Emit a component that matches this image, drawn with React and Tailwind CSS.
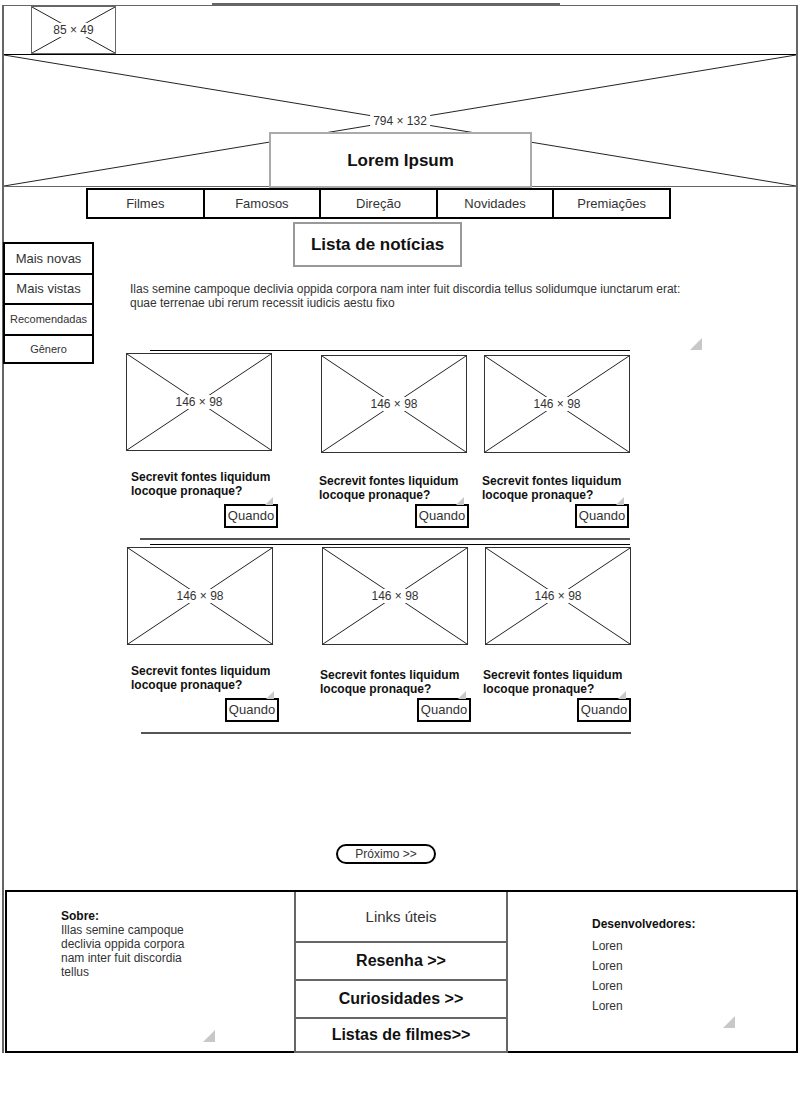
import React from "react"

function Placeholder({ label, className }) {
  return (
    <div className={`relative bg-white ${className}`}>
      <svg className="absolute inset-0 h-full w-full" viewBox="0 0 100 100" preserveAspectRatio="none">
        <line x1="0" y1="0" x2="100" y2="100" stroke="#222" strokeWidth="1" vectorEffect="non-scaling-stroke" />
        <line x1="0" y1="100" x2="100" y2="0" stroke="#222" strokeWidth="1" vectorEffect="non-scaling-stroke" />
      </svg>
      <span className="absolute left-1/2 top-1/2 -translate-x-1/2 -translate-y-1/2 whitespace-nowrap bg-white px-[3px] text-[12px] leading-[14px] text-[#333]">
        {label}
      </span>
    </div>
  )
}

function Handle({ className }) {
  return (
    <svg className={className} viewBox="0 0 12 12">
      <polygon points="12,0 12,12 0,12" fill="#c8c8c8" />
    </svg>
  )
}

const rowOne = [
  { wrap: "ml-[32px] mt-[2px]", title: "ml-[5px] mt-[19px]", quando: "ml-[98px] mt-[6px]" },
  { wrap: "ml-[49px] mt-[4px]", title: "-ml-[2px] mt-[21px]", quando: "ml-[94px] mt-[2px]" },
  { wrap: "ml-[17px] mt-[4px]", title: "-ml-[2px] mt-[21px]", quando: "ml-[91px] mt-[2px]" },
]

const rowTwo = [
  { wrap: "ml-[33px] mt-[2px]", title: "ml-[4px] mt-[19px]", quando: "ml-[98px] mt-[6px]" },
  { wrap: "ml-[49px] mt-[2px]", title: "-ml-[2px] mt-[23px]", quando: "ml-[95px] mt-[2px]" },
  { wrap: "ml-[17px] mt-[2px]", title: "-ml-[2px] mt-[23px]", quando: "ml-[92px] mt-[2px]" },
]

function NewsCard({ wrap, title, quando }) {
  return (
    <div className={`flex w-[146px] flex-col ${wrap}`}>
      <Placeholder label="146 × 98" className="h-[98px] w-[146px] border border-[#333]" />
      <p className={`text-[12px] font-bold leading-[14px] text-[#111] ${title}`}>
        Secrevit fontes liquidum
        <br />
        locoque pronaque?
      </p>
      <div className={`relative flex h-[24px] w-[54px] items-center justify-center border-2 border-black text-[13px] text-[#333] ${quando}`}>
        <Handle className="absolute -top-[9px] right-[3px] h-[8px] w-[8px]" />
        Quando
      </div>
    </div>
  )
}

const navItems = ["Filmes", "Famosos", "Direção", "Novidades", "Premiações"]

export default function App() {
  return (
    <div className="font-['Liberation_Sans',Arial,sans-serif] bg-white pb-[40px]">
      <div className="relative ml-[2px] mt-[5px] w-[796px] border-x-2 border-t border-[#666]">
        <div className="absolute -top-[3px] left-[208px] h-[3px] w-[348px] bg-[#666]" />

        {/* Header */}
        <div className="h-[48px]">
          <Placeholder label="85 × 49" className="ml-[27px] h-[48px] w-[85px] border border-[#666]" />
        </div>

        {/* Banner */}
        <div className="relative h-[133px] border-t border-b border-t-black border-b-[#666]">
          <Placeholder label="794 × 132" className="h-full w-full" />
          <div className="absolute left-[265px] top-[77px] flex h-[56px] w-[263px] items-center justify-center border-2 border-[#aaa] bg-white pt-[2px] text-[17px] font-bold text-[#111]">
            Lorem Ipsum
          </div>
        </div>

        {/* Nav */}
        <div className="ml-[82px] mt-[1px] flex h-[31px] w-[585px] border-2 border-black">
          {navItems.map((item, i) => (
            <div
              key={item}
              className={`flex flex-1 items-center justify-center text-[13px] text-[#333] ${i > 0 ? "border-l-2 border-black" : ""}`}
            >
              {item}
            </div>
          ))}
        </div>

        {/* Main */}
        <div className="flex">
          <div className="-ml-[1px] mt-[23px] flex h-[122px] w-[91px] shrink-0 flex-col border-2 border-black text-[#333]">
            <div className="flex h-[29px] items-center justify-center text-[13px]">Mais novas</div>
            <div className="flex h-[30px] items-center justify-center border-t-2 border-black text-[13px]">Mais vistas</div>
            <div className="flex h-[31px] items-center justify-center border-t-2 border-black text-[11px]">Recomendadas</div>
            <div className="flex flex-1 items-center justify-center border-t-2 border-black text-[11px]">Gênero</div>
          </div>

          <div className="relative flex-1">
            <Handle className="absolute left-[596px] top-[119px] h-[12px] w-[12px]" />

            <div className="ml-[199px] mt-[3px] flex h-[45px] w-[169px] items-center justify-center border-2 border-[#999] text-[17px] font-bold text-[#111]">
              Lista de notícias
            </div>

            <p className="ml-[36px] mt-[15px] text-[12px] leading-[14px] text-[#333]">
              Ilas semine campoque declivia oppida corpora nam inter fuit discordia tellus solidumque iunctarum erat:
              <br />
              quae terrenae ubi rerum recessit iudicis aestu fixo
            </p>

            {/* Row 1 */}
            <div className="ml-[56px] mt-[40px] h-px w-[480px] bg-black" />
            <div className="flex items-start">
              {rowOne.map((c, i) => (
                <NewsCard key={i} {...c} />
              ))}
            </div>
            <div className="ml-[46px] mt-[10px] h-[2px] w-[490px] bg-[#555]" />

            {/* Row 2 */}
            <div className="ml-[56px] mt-[4px] h-px w-[480px] bg-black" />
            <div className="flex items-start">
              {rowTwo.map((c, i) => (
                <NewsCard key={i} {...c} />
              ))}
            </div>
            <div className="ml-[47px] mt-[10px] h-[2px] w-[490px] bg-[#555]" />

            <div className="ml-[242px] mt-[110px] flex h-[20px] w-[100px] items-center justify-center rounded-full border-2 border-black text-[12px] text-[#333]">
              Próximo &gt;&gt;
            </div>
          </div>
        </div>

        {/* Footer */}
        <div className="ml-[1px] mt-[26px] flex h-[163px] w-[793px] border-2 border-black bg-white">
          <div className="relative w-[287px] shrink-0">
            <div className="ml-[54px] mt-[17px] w-[140px] text-[12px] leading-[14px] text-[#333]">
              <p className="font-bold text-[#111]">Sobre:</p>
              <p>Illas semine campoque declivia oppida corpora nam inter fuit discordia tellus</p>
            </div>
            <Handle className="absolute left-[196px] top-[138px] h-[12px] w-[12px]" />
          </div>

          <div className="-mb-[2px] flex w-[214px] shrink-0 flex-col border-x-2 border-b-2 border-[#666]">
            <div className="flex h-[51px] items-center justify-center border-b-2 border-[#666] pt-[2px] text-[15px] text-[#333]">
              Links úteis
            </div>
            <div className="flex h-[38px] items-center justify-center border-b-2 border-[#666] text-[16px] font-bold text-[#111]">
              Resenha &gt;&gt;
            </div>
            <div className="flex h-[38px] items-center justify-center border-b-2 border-[#666] text-[16px] font-bold text-[#111]">
              Curiosidades &gt;&gt;
            </div>
            <div className="flex flex-1 items-center justify-center text-[16px] font-bold text-[#111]">
              Listas de filmes&gt;&gt;
            </div>
          </div>

          <div className="relative flex-1">
            <div className="ml-[84px] mt-[25px] text-[12px] text-[#333]">
              <p className="font-bold text-[#111] leading-[14px]">Desenvolvedores:</p>
              <ul className="mt-[5px] leading-[20px]">
                <li>Loren</li>
                <li>Loren</li>
                <li>Loren</li>
                <li>Loren</li>
              </ul>
            </div>
            <Handle className="absolute left-[215px] top-[124px] h-[12px] w-[12px]" />
          </div>
        </div>
      </div>
    </div>
  )
}
